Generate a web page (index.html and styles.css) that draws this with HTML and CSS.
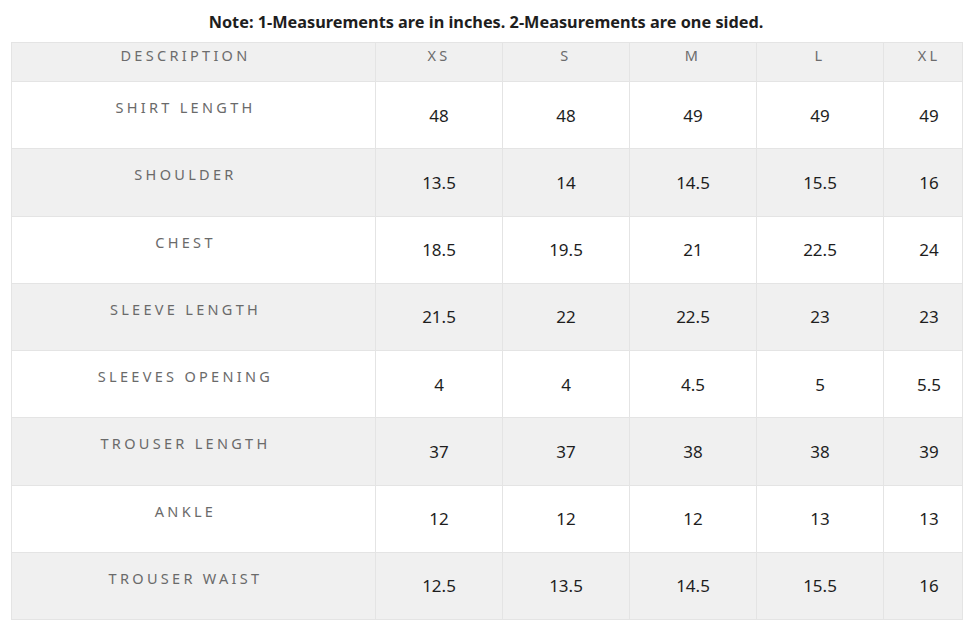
FILE: index.html
```html
<!DOCTYPE html>
<html>
<head>
<meta charset="utf-8">
<link rel="stylesheet" href="styles.css">
</head>
<body>
<div class="wrap">
  <p class="note">Note: 1-Measurements are in inches. 2-Measurements are one sided.</p>
  <table class="size-table">
    <colgroup>
      <col class="c-desc"><col class="c-size"><col class="c-size"><col class="c-size"><col class="c-size"><col class="c-xl">
    </colgroup>
    <thead>
      <tr><th class="desc">DESCRIPTION</th><th>XS</th><th>S</th><th>M</th><th>L</th><th class="last">XL</th></tr>
    </thead>
    <tbody>
      <tr><td class="desc">SHIRT LENGTH</td><td>48</td><td>48</td><td>49</td><td>49</td><td class="last">49</td></tr>
      <tr><td class="desc">SHOULDER</td><td>13.5</td><td>14</td><td>14.5</td><td>15.5</td><td class="last">16</td></tr>
      <tr><td class="desc">CHEST</td><td>18.5</td><td>19.5</td><td>21</td><td>22.5</td><td class="last">24</td></tr>
      <tr><td class="desc">SLEEVE LENGTH</td><td>21.5</td><td>22</td><td>22.5</td><td>23</td><td class="last">23</td></tr>
      <tr><td class="desc">SLEEVES OPENING</td><td>4</td><td>4</td><td>4.5</td><td>5</td><td class="last">5.5</td></tr>
      <tr><td class="desc">TROUSER LENGTH</td><td>37</td><td>37</td><td>38</td><td>38</td><td class="last">39</td></tr>
      <tr><td class="desc">ANKLE</td><td>12</td><td>12</td><td>12</td><td>13</td><td class="last">13</td></tr>
      <tr><td class="desc">TROUSER WAIST</td><td>12.5</td><td>13.5</td><td>14.5</td><td>15.5</td><td class="last">16</td></tr>
    </tbody>
  </table>
</div>
</body>
</html>
```

FILE: styles.css
```css
html, body {
  margin: 0;
  padding: 0;
  background: #fff;
}
body {
  font-family: "Noto Sans", "Open Sans", sans-serif;
  color: #222;
}
.wrap {
  padding: 0 10px 0 11px;
}
.note {
  margin: 0;
  height: 42px;
  line-height: 44px;
  text-align: center;
  font-weight: 700;
  font-size: 16.3px;
  color: #1e1e1e;
}
.size-table {
  width: 950px;
  border-collapse: collapse;
  table-layout: fixed;
}
.c-desc { width: 364px; }
.c-size { width: 127px; }
.c-xl { width: 79px; }
.size-table th,
.size-table td {
  border: 1px solid #e4e4e4;
  text-align: center;
  padding: 0;
}
.size-table thead tr {
  height: 39px;
}
.size-table tbody tr {
  height: 67.25px;
}
.size-table th {
  vertical-align: top;
  padding-top: 2px;
  font-weight: 400;
  font-size: 14.5px;
  letter-spacing: 3.3px;
  color: #6c6c6c;
  line-height: 20px;
}
.size-table thead tr,
.size-table tbody tr:nth-child(even) {
  background: #f0f0f0;
}
.size-table td {
  font-size: 17px;
  color: #1e1e1e;
  vertical-align: middle;
}
.size-table td.desc {
  vertical-align: top;
  padding-top: 15px;
  font-size: 14.5px;
  letter-spacing: 3.3px;
  color: #6a6a6a;
  line-height: 20px;
}
.size-table .desc {
  padding-right: 16px;
}
.size-table .last {
  padding-left: 12px;
}
```
